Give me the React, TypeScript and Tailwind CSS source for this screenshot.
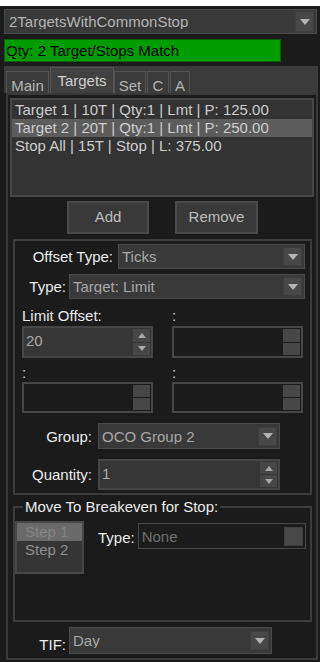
const font = "font-['Liberation_Sans',Arial,sans-serif]";

function DownArrow() {
  return (
    <svg width="10" height="6" viewBox="0 0 10 6">
      <path d="M0 0h10L5 6z" fill="#b4b4b4" />
    </svg>
  );
}

function UpArrow() {
  return (
    <svg width="8" height="5" viewBox="0 0 8 5">
      <path d="M0 5h8L4 0z" fill="#a8a8a8" />
    </svg>
  );
}

function ArrowBtn({ blank, tall }: { blank?: boolean; tall?: boolean }) {
  return (
    <div
      className={`mr-[2px] flex w-[19px] shrink-0 items-center justify-center border border-[#3e3e3e] bg-[#484848] ${
        tall ? 'h-[21px]' : 'h-[19px]'
      }`}
    >
      {!blank && <DownArrow />}
    </div>
  );
}

function Combo({
  className,
  value,
  textClass = 'text-[#a8a8a8]',
  blank,
  tall,
}: {
  className: string;
  value: string;
  textClass?: string;
  blank?: boolean;
  tall?: boolean;
}) {
  return (
    <div className={`flex items-center border border-[#4a4a4a] ${className}`}>
      <span className={`flex-1 truncate pl-[3px] text-[15px] leading-none ${textClass}`}>{value}</span>
      <ArrowBtn blank={blank} tall={tall} />
    </div>
  );
}

function Spin({ className, value, lit }: { className: string; value?: string; lit?: boolean }) {
  return (
    <div
      className={`flex items-stretch border-2 border-[#464646] ${lit ? 'bg-[#363636]' : 'bg-[#1b1b1b]'} ${className}`}
    >
      <span className="flex-1 pl-[2px] pt-[5px] text-[15px] leading-none text-[#a8a8a8]">{value}</span>
      <div className="flex w-[18px] flex-col gap-[1px] py-[1px] pr-[1px]">
        <div className="flex flex-1 items-center justify-center bg-[#474747]">{lit && <UpArrow />}</div>
        <div className="flex flex-1 items-center justify-center bg-[#474747]">
          {lit && (
            <svg width="8" height="5" viewBox="0 0 8 5">
              <path d="M0 0h8L4 5z" fill="#a8a8a8" />
            </svg>
          )}
        </div>
      </div>
    </div>
  );
}

const tabs = [
  { label: 'Main', w: 'w-[43px]' },
  { label: 'Targets', w: 'w-[64px]', active: true },
  { label: 'Set', w: 'w-[32px]' },
  { label: 'C', w: 'w-[22px]' },
  { label: 'A', w: 'w-[20px]' },
];

const targets = [
  'Target 1 | 10T | Qty:1 | Lmt | P: 125.00',
  'Target 2 | 20T | Qty:1 | Lmt | P: 250.00',
  'Stop All | 15T | Stop | L: 375.00',
];

export default function App() {
  return (
    <div className={`h-[662px] w-[320px] overflow-hidden bg-[#1b1b1b] ${font}`}>
      <div className="h-[6px] bg-white" />

      {/* strategy picker */}
      <Combo
        className="ml-[4px] mt-[3px] h-[25px] w-[313px] bg-[#393939]"
        value="2TargetsWithCommonStop"
        textClass="text-[#b4b4b4] pl-[4px]"
        tall
      />

      <div className="ml-[4px] mt-[5px] flex h-[23px] w-[277px] items-center border border-[#0b5c0b] bg-[#009c00] pl-[1px] text-[15px] leading-none text-black">
        Qty: 2 Target/Stops Match
      </div>

      {/* tabs */}
      <div className="ml-[4px] mt-[4px] flex h-[27px] w-[314px] items-end bg-[#3b3b3b] pl-[2px]">
        {tabs.map((t) => (
          <div
            key={t.label}
            className={`flex items-start justify-center border border-b-0 border-[#555555] text-[15px] leading-none ${t.w} ${
              t.active
                ? 'h-[26px] bg-[#414141] pt-[5px] text-[#cfcfcf]'
                : 'mr-[1px] h-[22px] bg-[#3b3b3b] pt-[6px] text-[#b4b4b4]'
            }`}
          >
            {t.label}
          </div>
        ))}
      </div>

      {/* tab page */}
      <div className="ml-[6px] h-[567px] w-[312px] border-2 border-[#393939]">
        <div className="ml-[2px] mt-[3px] h-[99px] w-[304px] border-2 border-[#474747] bg-[#333333] pt-[1px]">
          {targets.map((t, i) => (
            <div
              key={t}
              className={`h-[18px] pl-[3px] text-[15px] leading-[18px] text-[#cdcdcd] ${i === 1 ? 'bg-[#5c5c5c]' : ''}`}
            >
              {t}
            </div>
          ))}
        </div>

        <div className="mt-[4px] flex gap-[26px] pl-[59px]">
          <div className="flex h-[33px] w-[82px] items-center justify-center border-2 border-[#4a4a4a] bg-[#393939] text-[15px] text-[#bcbcbc]">
            Add
          </div>
          <div className="flex h-[33px] w-[83px] items-center justify-center border-2 border-[#4a4a4a] bg-[#393939] text-[15px] text-[#bcbcbc]">
            Remove
          </div>
        </div>

        {/* target settings */}
        <div className="ml-[5px] mt-[5px] h-[256px] w-[299px] border-2 border-[#3c3c3c] text-[15px] leading-none text-[#ececec]">
          <div className="mt-[3px] flex h-[25px] items-center">
            <span className="w-[99px] pr-[1px] text-right">Offset Type:</span>
            <Combo className="ml-[4px] h-[25px] w-[187px] bg-[#393939]" value="Ticks" />
          </div>
          <div className="mt-[5px] flex h-[25px] items-center">
            <span className="w-[52px] pr-[1px] text-right">Type:</span>
            <Combo className="ml-[2px] h-[25px] w-[236px] bg-[#393939]" value="Target: Limit" />
          </div>

          <div className="mt-[7px] flex h-[18px] items-center">
            <span className="w-[157px] pl-[7px]">Limit Offset:</span>
            <span className="text-[#d0d0d0]">:</span>
          </div>
          <div className="mt-[2px] flex gap-[19px] pl-[7px]">
            <Spin className="h-[32px] w-[131px]" value="20" lit />
            <Spin className="h-[32px] w-[131px]" />
          </div>

          <div className="mt-[5px] flex h-[18px] items-center">
            <span className="w-[157px] pl-[7px] text-[#d0d0d0]">:</span>
            <span className="text-[#d0d0d0]">:</span>
          </div>
          <div className="mt-[1px] flex gap-[19px] pl-[7px]">
            <Spin className="h-[31px] w-[131px]" />
            <Spin className="h-[31px] w-[131px]" />
          </div>

          <div className="mt-[10px] flex h-[26px] items-center">
            <span className="w-[77px] text-right">Group:</span>
            <Combo className="ml-[6px] h-[26px] w-[182px] bg-[#393939]" value="OCO Group 2" />
          </div>
          <div className="mt-[10px] flex h-[31px] items-center">
            <span className="w-[77px] text-right">Quantity:</span>
            <Spin className="ml-[6px] h-[31px] w-[182px]" value="1" lit />
          </div>
        </div>

        {/* breakeven */}
        <fieldset className="ml-[5px] mt-[4px] h-[123px] w-[299px] border-2 border-[#3c3c3c] text-[15px] leading-none">
          <legend className="ml-[8px] px-[2px] leading-[16px] text-[#ececec]">Move To Breakeven for Stop:</legend>
          <div className="mt-[6px] flex items-start">
            <div className="h-[53px] w-[69px] border-2 border-[#474747] bg-[#353535]">
              <div className="h-[18px] bg-[#6a6a6a] pl-[8px] leading-[18px] text-[#858585]">Step 1</div>
              <div className="h-[18px] pl-[8px] leading-[18px] text-[#8e8e8e]">Step 2</div>
            </div>
            <span className="ml-[14px] mt-[9px] text-[#ececec]">Type:</span>
            <Combo
              className="ml-[3px] mt-[2px] h-[26px] w-[168px] border-[#474747] bg-[#1c1c1c]"
              value="None"
              textClass="text-[#707070]"
              blank
            />
          </div>
        </fieldset>

        <div className="mt-[5px] flex h-[27px] items-end text-[15px] leading-none">
          <span className="w-[58px] pb-[2px] text-right text-[#ececec]">TIF:</span>
          <Combo className="ml-[3px] h-[27px] w-[203px] bg-[#393939]" value="Day" />
        </div>
      </div>
    </div>
  );
}
